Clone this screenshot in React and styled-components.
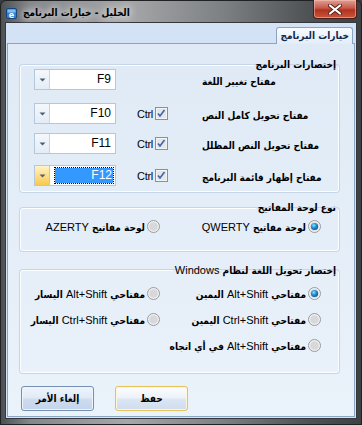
import React from "react";
import styled, { createGlobalStyle } from "styled-components";

const arabic = `"DejaVu Sans Condensed", "DejaVu Sans", sans-serif`;

const GlobalStyle = createGlobalStyle`
  html, body {
    margin: 0;
    padding: 0;
    background: #3a3c3f;
  }
  body {
    font-family: "Liberation Sans", "DejaVu Sans", sans-serif;
    font-size: 11px;
    color: #000;
  }
`;

const Window = styled.div`
  width: 362px;
  height: 425px;
  box-sizing: border-box;
  display: flex;
  flex-direction: column;
  padding: 0 4px 5px 4px;
  border: 1px solid #1f2123;
  border-radius: 6px 6px 0 0;
  background: linear-gradient(
    90deg,
    #4d5053 0%,
    #85888b 8%,
    #a5a7a9 35%,
    #7d8083 62%,
    #505356 85%,
    #3e4144 100%
  );
`;

const TitleBar = styled.div`
  height: 21px;
  display: flex;
  align-items: flex-start;
  position: relative;
`;

const AppIcon = styled.svg`
  margin: 7px 0 0 1px;
  flex: none;
`;

const Title = styled.div`
  margin: 6px 0 0 6px;
  font-family: ${arabic};
  font-size: 10px;
  font-weight: bold;
  direction: rtl;
  text-shadow: 0 0 6px #e8e8e8, 0 0 10px #e8e8e8;
`;

const CloseButton = styled.div`
  position: absolute;
  top: -1px;
  right: 0;
  width: 44px;
  height: 19px;
  box-sizing: border-box;
  border: 1px solid #4b1e18;
  border-top: none;
  border-radius: 0 0 4px 4px;
  background: linear-gradient(#e0a193 0%, #c6594a 45%, #b2321f 55%, #c8563c 100%);
  box-shadow: inset 0 0 0 1px rgba(255, 200, 190, 0.5);
  display: flex;
  align-items: center;
  justify-content: center;
`;

const Client = styled.div`
  flex: 1;
  min-width: 0;
  display: flex;
  flex-direction: column;
  border: 1px solid #34373b;
  background: #d3e2f4;
`;

const TabStrip = styled.div`
  height: 20px;
  display: flex;
  justify-content: flex-end;
  align-items: flex-end;
  padding-right: 3px;
`;

const Tab = styled.div`
  height: 17px;
  box-sizing: border-box;
  padding: 0 3px;
  margin-bottom: -1px;
  border: 1px solid #8aa4c4;
  border-bottom: none;
  border-radius: 3px 3px 0 0;
  background: linear-gradient(#f7fbff, #e3edf9);
  font-family: ${arabic};
  font-weight: bold;
  font-size: 10px;
  color: #15294a;
  direction: rtl;
  line-height: 16px;
  position: relative;
  z-index: 1;
`;

const Panel = styled.div`
  flex: 1;
  min-width: 0;
  display: flex;
  flex-direction: column;
  margin: 0 1px 1px 1px;
  padding: 14px 15px 0 12px;
  border: 1px solid #8ca5c3;
  background: linear-gradient(#dfeaf6, #eaf2fa);
`;

const Group = styled.fieldset`
  margin: ${(p) => p.$top || 0}px 0 0 0;
  padding: ${(p) => p.$pad};
  border: 1px solid #fbfdff;
  border-radius: 3px;
  box-shadow: 0 0 0 1px #c7d6e6;
  direction: rtl;
  min-width: 0;
`;

const Legend = styled.legend`
  padding: 0 2px;
  margin-bottom: -7px;
  line-height: 14px;
  font-family: ${arabic};
  font-weight: bold;
  font-size: 10px;
`;

const KeyRow = styled.div`
  direction: ltr;
  display: flex;
  align-items: center;
  height: 21px;
  margin-top: ${(p) => p.$gap || 0}px;
  padding-left: 13px;
`;

const Combo = styled.div`
  width: 82px;
  height: 21px;
  box-sizing: border-box;
  display: flex;
  border: 1px solid #b5c7dc;
  background: #fff;
  flex: none;
`;

const ComboButton = styled.div`
  width: 14px;
  display: flex;
  align-items: center;
  justify-content: center;
  border-right: 1px solid ${(p) => (p.$hot ? "#e3c572" : "#c6d4e4")};
  background: ${(p) =>
    p.$hot
      ? "linear-gradient(#fff3c8, #ffd97a 60%, #f7c94d)"
      : "linear-gradient(#f4f8fc, #e4ecf6)"};
`;

const ComboField = styled.div`
  flex: 1;
  display: flex;
  align-items: center;
  justify-content: flex-end;
  padding: ${(p) => (p.$focused ? "2px 2px 2px 5px" : "0 3px 0 0")};
`;

const ComboText = styled.span`
  font-size: 12px;
  line-height: 15px;
  padding: 0 1px;
  ${(p) =>
    p.$selected &&
    `
    flex: 1;
    text-align: right;
    background: #3399ff;
    color: #fff;
    outline: 1px dotted #000;
  `}
`;

const CtrlBox = styled.div`
  display: flex;
  align-items: center;
  margin-left: 21px;
  gap: 2px;
  visibility: ${(p) => (p.$show ? "visible" : "hidden")};
  font-size: 11px;
  letter-spacing: -0.3px;
`;

const KeyLabel = styled.div`
  margin-left: 34px;
  padding-top: 4px;
  direction: rtl;
  font-family: ${arabic};
  font-weight: bold;
  font-size: 10px;
  white-space: nowrap;
`;

const RadioGrid = styled.div`
  display: grid;
  grid-template-columns: 161px auto;
  row-gap: 10px;
  padding-right: 17px;
  justify-content: start;
`;

const RadioItem = styled.label`
  display: flex;
  align-items: center;
  gap: 2px;
  height: 16px;
  white-space: nowrap;
`;

const RadioText = styled.span`
  font-family: ${arabic};
  font-weight: bold;
  font-size: 10px;
  padding-top: 2px;
`;

const Latin = styled.span`
  font-family: "Liberation Sans", sans-serif;
  font-weight: normal;
  font-size: 11px;
`;

const ButtonRow = styled.div`
  display: flex;
  gap: 21px;
  margin: 13px 0 0 1px;
`;

const Button = styled.div`
  width: 73px;
  height: 25px;
  box-sizing: border-box;
  border: 1px solid ${(p) => (p.$default ? "#e6c25a" : "#7690b4")};
  border-radius: 3px;
  background: ${(p) =>
    p.$default
      ? "linear-gradient(#fbfcfe 0%, #eef3fa 45%, #dbe6f4 55%, #cfdcee 100%)"
      : "linear-gradient(#eef4fb 0%, #e1eaf6 45%, #cddcef 55%, #c3d4ec 100%)"};
  box-shadow: inset 0 0 0 1px ${(p) => (p.$default ? "#fff6d6" : "#eef4fb")};
  display: flex;
  align-items: center;
  justify-content: center;
  font-family: ${arabic};
  font-weight: bold;
  font-size: 10px;
  direction: rtl;
`;

const Arrow = () => (
  <svg width="7" height="4" viewBox="0 0 7 4">
    <path d="M0.5 0.5h6L3.5 3.5z" fill="#4b5f7a" />
  </svg>
);

const CheckBox = () => (
  <svg width="13" height="13" viewBox="0 0 13 13">
    <rect x="0.5" y="0.5" width="12" height="12" fill="#f4f4f4" stroke="#8e8f8f" />
    <rect x="2" y="2" width="9" height="9" fill="#e3e6ea" />
    <path d="M3 6.5l2 2.5 4.5-6" fill="none" stroke="#3c65a8" strokeWidth="1.6" />
  </svg>
);

const Radio = ({ checked }) => (
  <svg width="13" height="13" viewBox="0 0 13 13" style={{ flex: "none" }}>
    <defs>
      <radialGradient id="rb" cx="0.4" cy="0.35" r="0.7">
        <stop offset="0" stopColor="#8fe0ff" />
        <stop offset="0.5" stopColor="#1f8ed6" />
        <stop offset="1" stopColor="#0c4f91" />
      </radialGradient>
    </defs>
    <circle cx="6.5" cy="6.5" r="6" fill="#f0f0f0" stroke="#9a9a9a" />
    <circle cx="6.5" cy="6.5" r="4.3" fill="#d6d8db" />
    {checked && <circle cx="6.5" cy="6.5" r="3.6" fill="url(#rb)" />}
  </svg>
);

const keyRows = [
  { label: "مفتاح تغيير اللغة", key: "F9", ctrl: false, gap: 2 },
  { label: "مفتاح تحويل كامل النص", key: "F10", ctrl: true, gap: 13 },
  { label: "مفتاح تحويل النص المظلل", key: "F11", ctrl: true, gap: 9 },
  { label: "مفتاح إظهار قائمة البرنامج", key: "F12", ctrl: true, gap: 11, focused: true },
];

const winOptions = [
  { keys: "Alt+Shift", after: " اليمين", checked: true },
  { keys: "Alt+Shift", after: " اليسار" },
  { keys: "Ctrl+Shift", after: " اليمين" },
  { keys: "Ctrl+Shift", after: " اليسار" },
  { keys: "Alt+Shift", after: " في أي اتجاه" },
];

export default function App() {
  return (
    <>
      <GlobalStyle />
      <Window>
        <TitleBar>
          <AppIcon width="11" height="11" viewBox="0 0 11 11">
            <rect x="0.5" y="0.5" width="10" height="10" rx="1.5" fill="#2f7fd0" stroke="#13457e" />
            <rect x="1.5" y="1.5" width="8" height="3" fill="#7fc0f4" />
            <text x="5.5" y="9.5" fontSize="8" fontWeight="bold" fill="#fff" textAnchor="middle" fontFamily="DejaVu Sans">e</text>
          </AppIcon>
          <Title>الخليل - خيارات البرنامج</Title>
          <CloseButton>
            <svg width="14" height="11" viewBox="0 0 14 11">
              <path d="M2 1.5l10 8M12 1.5l-10 8" stroke="#5a2318" strokeWidth="4" strokeLinecap="round" />
              <path d="M2 1.5l10 8M12 1.5l-10 8" stroke="#fff" strokeWidth="2.2" strokeLinecap="round" />
            </svg>
          </CloseButton>
        </TitleBar>
        <Client>
          <TabStrip>
            <Tab>خيارات البرنامج</Tab>
          </TabStrip>
          <Panel>
            <Group $pad="2px 0 5px 0">
              <Legend>إختصارات البرنامج</Legend>
              {keyRows.map((r) => (
                <KeyRow key={r.key} $gap={r.gap}>
                  <Combo>
                    <ComboButton $hot={r.focused}>
                      <Arrow />
                    </ComboButton>
                    <ComboField $focused={r.focused}>
                      <ComboText $selected={r.focused}>{r.key}</ComboText>
                    </ComboField>
                  </Combo>
                  <CtrlBox $show={r.ctrl}>
                    Ctrl
                    <CheckBox />
                  </CtrlBox>
                  <KeyLabel>{r.label}</KeyLabel>
                </KeyRow>
              ))}
            </Group>
            <Group $top={9} $pad="10px 0 16px 0">
              <Legend>نوع لوحة المفاتيح</Legend>
              <RadioGrid>
                <RadioItem>
                  <Radio checked />
                  <RadioText>
                    لوحة مفاتيح <Latin>QWERTY</Latin>
                  </RadioText>
                </RadioItem>
                <RadioItem>
                  <Radio />
                  <RadioText>
                    لوحة مفاتيح <Latin>AZERTY</Latin>
                  </RadioText>
                </RadioItem>
              </RadioGrid>
            </Group>
            <Group $top={12} $pad="14px 0 19px 0">
              <Legend>
                إختصار تحويل اللغة لنظام <Latin>Windows</Latin>
              </Legend>
              <RadioGrid>
                {winOptions.map((o, i) => (
                  <RadioItem key={i}>
                    <Radio checked={o.checked} />
                    <RadioText>
                      مفتاحي <Latin>{o.keys}</Latin>
                      {o.after}
                    </RadioText>
                  </RadioItem>
                ))}
              </RadioGrid>
            </Group>
            <ButtonRow>
              <Button>إلغاء الأمر</Button>
              <Button $default>حفظ</Button>
            </ButtonRow>
          </Panel>
        </Client>
      </Window>
    </>
  );
}
